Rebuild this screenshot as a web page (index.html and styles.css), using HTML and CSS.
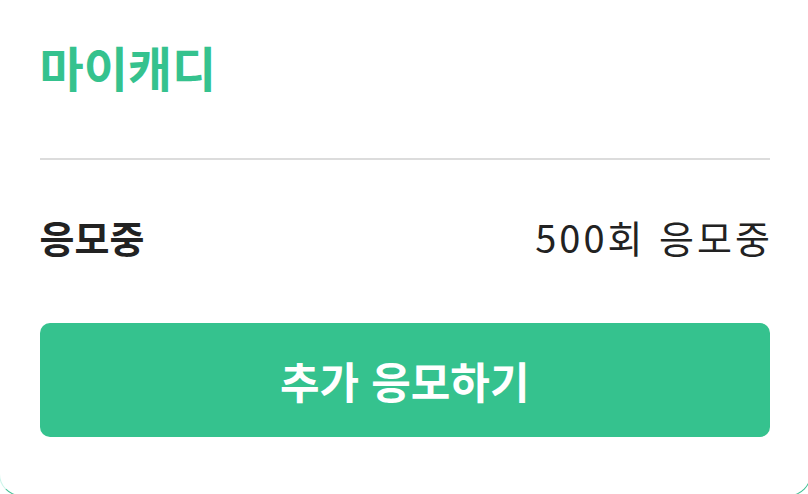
FILE: index.html
```html
<!DOCTYPE html>
<html lang="ko">
<head>
<meta charset="utf-8">
<title>마이캐디</title>
<link rel="stylesheet" href="styles.css">
</head>
<body>
<div class="card">
  <div class="header">
    <h1 class="title">마이캐디</h1>
  </div>
  <div class="divider"></div>
  <div class="row">
    <span class="label">응모중</span>
    <span class="value">500회 응모중</span>
  </div>
  <button class="cta" type="button">추가 응모하기</button>
</div>
</body>
</html>
```

FILE: styles.css
```css
html, body {
  margin: 0;
  padding: 0;
  background: #ffffff;
  overflow: hidden;
}
body {
  width: 808px;
  height: 494px;
  font-family: "Noto Sans CJK KR", "Noto Sans", sans-serif;
  color: #222222;
}
.card {
  box-sizing: border-box;
  width: 812px;
  height: 516px;
  margin-left: -1px;
  margin-top: -20px;
  padding: 20px 40px 0 39.5px;
  border: 1.5px solid #3fbf93;
  border-left-color: #cdf5ea;
  border-radius: 22px;
  background: #ffffff;
  display: flex;
  flex-direction: column;
}
.header {
  height: 129px;
  display: flex;
  align-items: center;
}
.title {
  margin: 0;
  font-size: 48px;
  line-height: 1;
  font-weight: 700;
  color: #35c28e;
}
.divider {
  height: 2px;
  background: #dcdcdc;
  margin-top: 28px;
}
.row {
  height: 153px;
  display: flex;
  align-items: center;
  justify-content: space-between;
  font-size: 38px;
  line-height: 1;
}
.label {
  font-weight: 700;
  color: #222222;
}
.value {
  font-weight: 400;
  color: #222222;
  letter-spacing: 3px;
  margin-right: -3px;
}
.cta {
  margin-top: 10px;
  height: 114px;
  border: none;
  border-radius: 10px;
  background: #35c28e;
  color: #ffffff;
  font-family: inherit;
  font-size: 43px;
  font-weight: 700;
  line-height: 1;
  padding: 0;
  cursor: pointer;
}
```
